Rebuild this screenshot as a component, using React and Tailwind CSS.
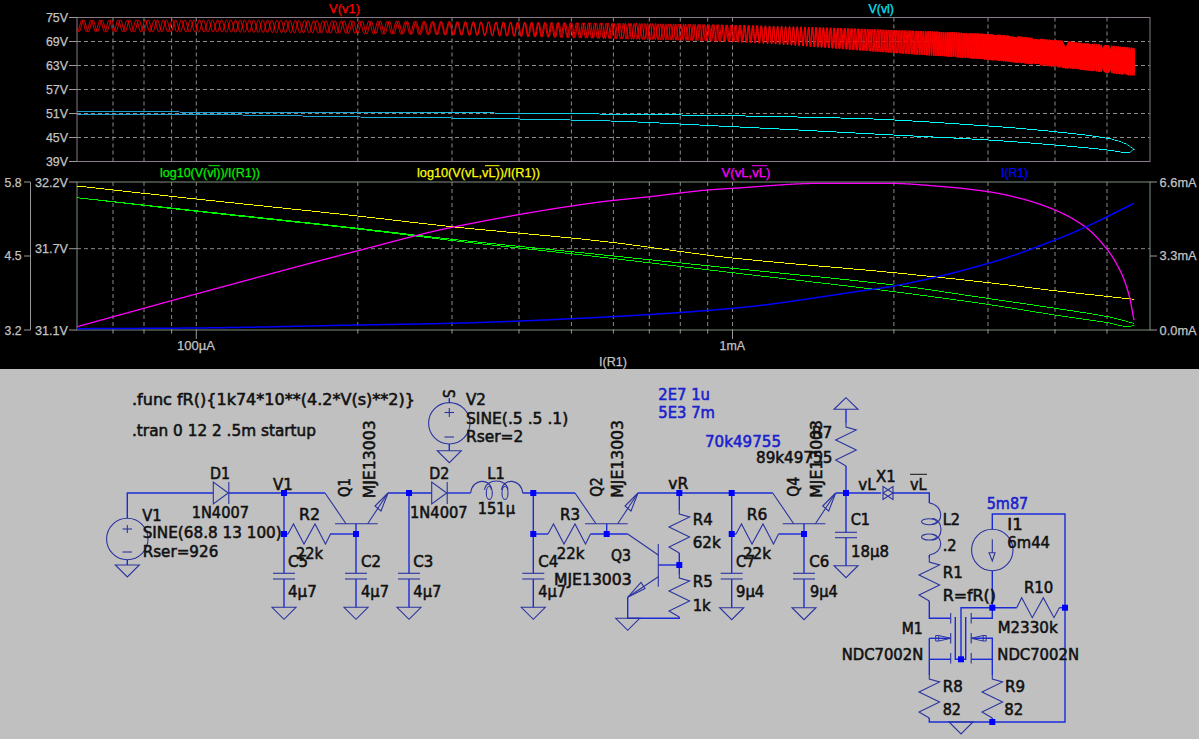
import React from "react";

// monotone cubic interpolation through the read-off trace points
const hermite = (pts) => {
  const n = pts.length;
  const d = [];
  for (let i = 0; i < n - 1; i++) d.push((pts[i + 1][1] - pts[i][1]) / (pts[i + 1][0] - pts[i][0]));
  const m = [d[0]];
  for (let i = 1; i < n - 1; i++) m.push(d[i - 1] * d[i] <= 0 ? 0 : (2 * d[i - 1] * d[i]) / (d[i - 1] + d[i]));
  m.push(d[n - 2]);
  return (x) => {
    if (x <= pts[0][0]) return pts[0][1];
    for (let i = 0; i < n - 1; i++) {
      if (x <= pts[i + 1][0]) {
        const h = pts[i + 1][0] - pts[i][0];
        const t = (x - pts[i][0]) / h;
        const t2 = t * t, t3 = t2 * t;
        return (2 * t3 - 3 * t2 + 1) * pts[i][1] + (t3 - 2 * t2 + t) * h * m[i] + (-2 * t3 + 3 * t2) * pts[i + 1][1] + (t3 - t2) * h * m[i + 1];
      }
    }
    return pts[n - 1][1];
  };
};

// stair-stepped trace, as a waveform plotted on a pixel grid
const stepped = (pts) => {
  const f = hermite(pts);
  const out = [];
  const x0 = pts[0][0], x1 = pts[pts.length - 1][0];
  for (let x = x0; x <= x1; x += 1) out.push(`${x.toFixed(1)},${(Math.floor(f(x)) + 0.5).toFixed(1)}`);
  out.push(`${x1},${pts[pts.length - 1][1]}`);
  return out.join(" ");
};
const smooth = (pts) => {
  const f = hermite(pts);
  const out = [];
  const x0 = pts[0][0], x1 = pts[pts.length - 1][0];
  for (let x = x0; x < x1; x += 0.5) out.push(`${x.toFixed(1)},${f(x).toFixed(2)}`);
  out.push(`${x1},${pts[pts.length - 1][1]}`);
  return out.join(" ");
};

const X0 = 77, X1 = 1134.8;
const fTop = hermite([[77, 20], [196, 20], [452, 21.7], [600, 23], [733, 25], [894, 30], [988, 34], [1055, 40], [1135, 48]]);
const fBot = hermite([[77, 31.7], [196, 32], [452, 35], [600, 38.5], [733, 42], [894, 53], [988, 60], [1055, 67], [1135, 76]]);
const redTrace = (rate, offset) => {
  let ph = offset;
  const out = [];
  for (let x = X0; x <= X1; x += 0.2) {
    let p = x < 400 ? 9.2 : 9.2 * Math.exp(-(x - 400) / 460);
    if (x > 900) p *= Math.exp(-(x - 900) / 130);
    ph += (0.2 * 2 * Math.PI * rate) / p;
    const t = fTop(x), b = fBot(x);
    out.push(`${x.toFixed(1)},${((t + b) / 2 + ((b - t) / 2) * Math.sin(ph)).toFixed(2)}`);
  }
  return out.join(" ");
};
const redA = redTrace(1, 0);
const redB = redTrace(1.018, 1.1);

const cyanTop = [[77, 111.7], [357, 112.5], [440, 112.7], [600, 114], [852, 118.3], [988.5, 126], [1055, 131.7], [1107.6, 138.3], [1125, 143.5], [1134, 149]];
const cyanBot = [[77, 114], [196, 114.5], [383, 117.3], [452, 118], [600, 120.7], [733, 126.7], [894, 135], [988.5, 140], [1055, 145], [1107.6, 150], [1129, 152.7], [1134, 149]];
const yellow = [[77, 186], [196.3, 199], [357.8, 216], [452, 226.7], [600, 241], [732.5, 258], [894, 272.7], [988.5, 282.7], [1055, 290.7], [1134, 299.3]];
const greenA = [[77, 197.7], [196, 210.7], [358, 228.3], [452, 239.3], [600, 254.6], [732.5, 268.3], [894, 285], [988.5, 298.5], [1055, 308.3], [1107.6, 316.7], [1134, 323.3]];
const greenB = [[77, 197.7], [196, 211.3], [358, 229], [452, 240.5], [600, 257], [732.5, 272.7], [894, 291.7], [988.5, 304.5], [1055, 315], [1107.6, 322.7], [1129, 326.7], [1134, 325]];
const magenta = [[77, 326.7], [196, 294], [358, 250.7], [452, 227.3], [600, 202], [649.7, 196.7], [707.7, 190], [733, 188.3], [821.5, 183.3], [888.4, 183.3], [943.8, 186.7], [988.5, 191.7], [1020, 198.3], [1055, 210], [1085, 226.7], [1107.6, 250], [1121.4, 273.3], [1129, 295], [1134, 320]];
const blue = [[77, 328.7], [196, 328], [358, 325], [452, 323.3], [600, 317.3], [733, 308.3], [867.4, 290], [894, 286], [988.5, 263.3], [1055, 240], [1085, 227.3], [1134, 203.3]];

const gridX = [113, 144, 171.6, 196.3, 357.8, 452, 519, 571.4, 613.4, 649.3, 680.3, 707.7, 732.5, 893.9, 988, 1055, 1107];
const gridTop = [41.5, 65.5, 89.5, 113.5, 137.5];
const axisTop = [["75V", 17.5], ["69V", 41.5], ["63V", 65.5], ["57V", 89.5], ["51V", 113.5], ["45V", 137.5], ["39V", 161.5]];

const Tx = ({ x, y, w, c = "#c4c4c4", t }) => (
  <text x={x} y={y} fill={c} stroke={c} strokeWidth="0.25" fontSize="13" textLength={w} lengthAdjust="spacingAndGlyphs">{t}</text>
);

const Plot = () => (
  <svg viewBox="0 0 1199 369" className="block w-[1199px] h-[369px] font-['Liberation_Sans',sans-serif]">
    <defs>
      <linearGradient id="cy" gradientUnits="userSpaceOnUse" x1="300" x2="800" y1="0" y2="0">
        <stop offset="0" stopColor="#1ca0d4" />
        <stop offset="1" stopColor="#00ffff" />
      </linearGradient>
    </defs>
    {/* grid */}
    <g stroke="#8a8a8a" strokeWidth="1" strokeDasharray="4 3" fill="none">
      {gridX.map((x) => <line key={x} x1={x} x2={x} y1="17.5" y2="161.5" />)}
      {gridX.map((x) => <line key={x} x1={x} x2={x} y1="182" y2="330" />)}
      {gridTop.map((y) => <line key={y} x1="77" x2="1150" y1={y} y2={y} />)}
      <line x1="77" x2="1150" y1="248.7" y2="248.7" />
    </g>
    {/* frames */}
    <rect x="77" y="17.5" width="1073" height="144" fill="none" stroke="#857a85" />
    <rect x="77" y="182" width="1073" height="148" fill="none" stroke="#7f907f" />
    {/* ticks */}
    <g stroke="#9a9a9a" strokeWidth="1">
      {axisTop.map(([, y]) => <line key={y} x1="69" x2="77" y1={y} y2={y} />)}
      {[182, 248.7, 330].map((y) => <line key={y} x1="69" x2="77" y1={y} y2={y} />)}
      {[182, 256, 330].map((y) => <line key={y} x1="24" x2="30.5" y1={y} y2={y} />)}
      <line x1="30.5" x2="30.5" y1="182" y2="330" />
      {[182, 256, 330].map((y) => <line key={y} x1="1150" x2="1157" y1={y} y2={y} />)}
      {gridX.map((x) => <line key={x} x1={x} x2={x} y1="330" y2={x === 196.3 || x === 732.5 ? 339 : 333.5} />)}
    </g>
    {/* traces */}
    <g fill="none" strokeWidth="1" strokeLinejoin="bevel">
      <polyline points={redA} stroke="#ff0000" />
      <polyline points={redB} stroke="#ff0000" />
      <polyline points={stepped(cyanTop)} stroke="url(#cy)" />
      <polyline points={stepped(cyanBot)} stroke="url(#cy)" />
      <polyline points={stepped(greenA)} stroke="#00ff00" />
      <polyline points={stepped(greenB)} stroke="#00f000" />
      <polyline points={stepped(yellow)} stroke="#ffff00" />
      <polyline points={smooth(magenta)} stroke="#ff00ff" strokeWidth="1.3" />
      <polyline points={smooth(blue)} stroke="#0000ff" strokeWidth="1.5" />
    </g>
    {/* axis text */}
    {axisTop.map(([t, y]) => <Tx key={t} x="46" y={y + 4.5} w="22" t={t} />)}
    <Tx x="35" y="186.5" w="33" t="32.2V" />
    <Tx x="35" y="253" w="33" t="31.7V" />
    <Tx x="35" y="334.5" w="33" t="31.1V" />
    <Tx x="4.6" y="186.5" w="17" t="5.8" />
    <Tx x="4.6" y="260" w="17" t="4.5" />
    <Tx x="4.6" y="334.5" w="17" t="3.2" />
    <Tx x="1159.6" y="186.5" w="37" t="6.6mA" />
    <Tx x="1159.6" y="260" w="37" t="3.3mA" />
    <Tx x="1159.6" y="334.5" w="37" t="0.0mA" />
    <Tx x="177" y="349.5" w="38" t="100µA" />
    <Tx x="719.6" y="349.5" w="25.5" t="1mA" />
    <Tx x="599" y="366" w="28" t="I(R1)" />
    {/* trace names */}
    <Tx x="329" y="12.5" w="31" c="#ff0000" t="V(v1)" />
    <Tx x="868.5" y="12.5" w="25.5" c="#00e8ff" t="V(vl)" />
    <Tx x="160" y="177" w="100" c="#00f000" t="log10(V(vl))/I(R1))" />
    <Tx x="417" y="177" w="123" c="#ffff00" t="log10(V(vL,vL))/I(R1))" />
    <Tx x="721.5" y="177" w="49" c="#ff00ff" t="V(vL,vL)" />
    <Tx x="1001" y="177" w="27" c="#0000ff" t="I(R1)" />
    <g strokeWidth="1">
      <line x1="208.6" x2="220" y1="165.7" y2="165.7" stroke="#00f000" />
      <line x1="485" x2="499.5" y1="165.7" y2="165.7" stroke="#ffff00" />
      <line x1="752" x2="767" y1="165.7" y2="165.7" stroke="#ff00ff" />
    </g>
  </svg>
);

const WIRE = "#1a2bd8";
const SYM = "#2a339f";

const W = ({ p }) => <polyline points={p} fill="none" stroke={WIRE} strokeWidth="1.4" />;
const S = ({ p, fill = "none" }) => <polyline points={p} fill={fill} stroke={SYM} strokeWidth="1.1" />;
const Dot = ({ x, y }) => <rect x={x - 3} y={y - 3} width="6" height="6" fill="#0000ff" />;
const Gnd = ({ x, y }) => <polygon points={`${x - 12},${y} ${x + 12},${y} ${x},${y + 12}`} fill="none" stroke={SYM} strokeWidth="1.1" />;
const Cap = ({ x, y = 573.3, h = 5.7 }) => (
  <g>
    <S p={`${x - 11},${y} ${x + 11},${y}`} />
    <S p={`${x - 11},${y + h} ${x + 11},${y + h}`} />
  </g>
);
const Bjt = ({ x }) => (
  <g>
    <S p={`${x},493 ${x + 21},523.7`} />
    <S p={`${x + 10},523.7 ${x + 52.7},523.7`} />
    <S p={`${x + 42.7},523.7 ${x + 63},493`} />
    <polygon points={`${x + 63},493 ${x + 50},506 ${x + 56},511`} fill="none" stroke={SYM} strokeWidth="1.1" />
  </g>
);
const Zig = ({ x, y, d = 10.3 }) => (
  <S p={`${x},${y} ${x},${y + 4} ${x + d},${y + 7} ${x - d},${y + 17} ${x + d},${y + 27} ${x - d},${y + 37} ${x},${y + 43}`} />
);
const ZigH = ({ x }) => (
  <S p={`${x},534 ${x + 5.5},524 ${x + 16},544 ${x + 27},524 ${x + 37.5},544 ${x + 42.5},534`} />
);
const Dio = ({ x }) => (
  <g>
    <polygon points={`${x},482 ${x},504 ${x + 15},493`} fill="none" stroke={SYM} strokeWidth="1.1" />
    <S p={`${x + 15.5},482 ${x + 15.5},504`} />
  </g>
);

const L = ({ x, y, w, t, c = "#111111" }) => (
  <text x={x} y={y} fill={c} stroke={c} strokeWidth="0.55" fontSize="15" textLength={w} lengthAdjust="spacingAndGlyphs">{t}</text>
);
const R = ({ x, y, w, t }) => (
  <text x={x} y={y} fill="#111111" stroke="#111111" strokeWidth="0.55" fontSize="15" textLength={w} lengthAdjust="spacingAndGlyphs" transform={`rotate(-90 ${x} ${y})`}>{t}</text>
);

const labels = [
  [132, 405, 283, ".func fR(){1k74*10**(4.2*V(s)**2)}"],
  [132, 436, 184, ".tran 0 12 2 .5m startup"],
  [210, 479, 20, "D1"], [191.7, 518, 57.3, "1N4007"], [273, 490, 19.7, "V1"],
  [142.3, 520.7, 19.4, "V1"], [142.7, 538, 139, "SINE(68.8 13 100)"], [142.7, 556.7, 75.6, "Rser=926"],
  [299, 520, 21, "R2"], [296, 559, 27, "22k"], [288, 566.7, 20, "C5"], [288, 597.3, 28.7, "4µ7"],
  [361, 566.7, 20, "C2"], [361, 597.3, 28, "4µ7"], [413.3, 566.7, 20, "C3"], [413.3, 597.3, 28, "4µ7"],
  [466, 405, 20, "V2"], [466, 424, 102.3, "SINE(.5 .5 .1)"], [466, 441.7, 57.3, "Rser=2"],
  [429.3, 479.3, 20, "D2"], [410, 517.7, 57.7, "1N4007"], [487.3, 479, 17.4, "L1"], [477.7, 514, 37.3, "151µ"],
  [668.3, 489.3, 20, "vR"], [560, 520, 20, "R3"], [556.7, 559.3, 27.6, "22k"], [538.3, 566.7, 20, "C4"],
  [554, 585, 77.7, "MJE13003"], [538.3, 597, 27.7, "4µ7"], [611, 560.7, 20, "Q3"],
  [692.7, 525, 20, "R4"], [692.7, 548.3, 28, "62k"], [692.7, 586.7, 20, "R5"], [692.7, 610.7, 18, "1k"],
  [746.7, 520, 20.6, "R6"], [743, 559.3, 28, "22k"], [736, 566.7, 19, "C7"], [736, 597.3, 28.3, "9µ4"],
  [809.3, 566.7, 20, "C6"], [810, 597.3, 27.7, "9µ4"],
  [811.7, 438.3, 20.6, "R7"], [756, 462.7, 76.3, "89k49755"],
  [858.3, 490, 17.4, "vL"], [876, 481.7, 19.7, "X1"], [910, 490, 16.7, "vL"],
  [850.7, 525, 19.3, "C1"], [851, 556.7, 38, "18µ8"],
  [942.7, 525, 17.3, "L2"], [942.7, 550.7, 14, ".2"], [942.7, 577.7, 20, "R1"], [942.7, 600.7, 53.3, "R=fR()"],
  [1007.3, 530, 15.4, "I1"], [1007.3, 548.3, 42.7, "6m44"], [1024, 593.3, 29.3, "R10"], [1020, 633.3, 37.7, "330k"],
  [997.7, 633.3, 22.3, "M2"], [901.7, 634.3, 21, "M1"], [841.7, 660, 81.6, "NDC7002N"], [997.3, 660, 81.7, "NDC7002N"],
  [942.7, 691.7, 20, "R8"], [942.7, 715, 18.3, "82"], [1005, 691.7, 20, "R9"], [1004.3, 715, 19, "82"],
];
const blueLabels = [
  [658.3, 400, 51.7, "2E7 1u"], [658.3, 418.3, 56.7, "5E3 7m"], [705, 446.7, 76, "70k49755"], [986.7, 509.3, 41.6, "5m87"],
];
const vertical = [
  [350, 497, 19, "Q1"], [375, 498.3, 78, "MJE13003"], [601.7, 496.7, 19.4, "Q2"], [623.3, 497.7, 77.7, "MJE13003"],
  [799, 496.7, 20, "Q4"], [822.3, 497.7, 77.7, "MJE13003"], [455, 398, 8.5, "S"],
];

const Mos = ({ x, dir }) => (
  <g>
    <S p={`${x},613 ${x},623.5`} />
    <S p={`${x},633 ${x},643.5`} />
    <S p={`${x},653 ${x},663.5`} />
    <polygon points={`${x},638.3 ${x + dir * 12},635.5 ${x + dir * 12},641 `} fill="none" stroke={SYM} strokeWidth="1" />
    <polyline points={`${x + dir * 12},635.5 ${x + dir * 15},635.5 ${x + dir * 15},641 ${x + dir * 12},641`} fill="none" stroke={SYM} strokeWidth="1" />
  </g>
);

const Schematic = () => (
  <svg viewBox="0 369 1199 370" className="block w-[1199px] h-[370px] font-['DejaVu_Sans',sans-serif]">
    {/* wires */}
    <W p="127.3,518 127.3,493 213,493" />
    <W p="229,493 325,493" />
    <W p="388,493 432,493" />
    <W p="447,493 470.7,493" />
    <W p="522.7,493 575,493" />
    <W p="638,493 772.7,493" />
    <W p="836,493 881,493" />
    <W p="893,493 929.3,493 929.3,503" />
    <W p="284,493 284,573.3" /><W p="284,579 284,607.3" />
    <W p="284,534 288,534" /><W p="330,534 356,534" />
    <W p="356,523.7 356,573.3" /><W p="356,579 356,607.3" />
    <W p="409,493 409,573.3" /><W p="409,579 409,607.3" />
    <W p="533.3,493 533.3,573.3" /><W p="533.3,579 533.3,607.3" />
    <W p="533.3,534 548,534" /><W p="590.5,534 627.7,534" />
    <W p="606.7,523.7 606.7,534" />
    <W p="679.3,493 679.3,510" /><W p="679.3,553 679.3,574" /><W p="679.3,617 679.3,618.3 627.7,618.3 627.7,597.3" />
    <W p="658.3,565 679.3,565" />
    <W p="731.7,493 731.7,573.3" /><W p="731.7,579 731.7,607.7" />
    <W p="731.7,534 736,534" /><W p="778.5,534 804,534" />
    <W p="804,523.7 804,573.3" /><W p="804,579 804,607.7" />
    <W p="846,409.3 846,423" /><W p="846,466 846,532.3" /><W p="846,537.7 846,565.7" />
    <W p="929.3,555 929.3,558" /><W p="929.3,601 929.3,618.3 950.7,618.3" />
    <W p="929.3,638.3 950.7,638.3" /><W p="929.3,638.3 929.3,675" /><W p="929.3,659.3 950.7,659.3" />
    <W p="971.2,618.3 992.3,618.3 992.3,607.7" /><W p="971.2,638.3 992.3,638.3 992.3,675" /><W p="971.2,659.3 992.3,659.3" />
    <W p="929.3,718 929.3,722 1065,722 1065,514 992.3,514 992.3,529.3" />
    <W p="992.3,570.7 992.3,607.7" />
    <W p="961,659.3 961,607.7 1016.7,607.7" /><W p="1059.3,607.7 1065,607.7" />
    <W p="955.3,617 955.3,659.3 965.7,659.3 965.7,617" />
    <W p="992.3,718 992.3,722" />
    <W p="449.3,398 449.3,402.6" /><W p="449.3,444 449.3,450.7" />

    {/* sources */}
    <circle cx="127.3" cy="539" r="20.7" fill="none" stroke={SYM} strokeWidth="1.1" />
    <S p="127.3,525 127.3,533" /><S p="122.5,529 132,529" /><S p="122.5,552 132,552" />
    <W p="127.3,559.7 127.3,565" /><Gnd x={127.3} y={565} />
    <circle cx="449.3" cy="423.3" r="20.7" fill="none" stroke={SYM} strokeWidth="1.1" />
    <S p="449.3,408 449.3,417" /><S p="444.5,412.5 454,412.5" /><S p="444.5,437 454,437" />
    <Gnd x={449.3} y={450.7} />
    <circle cx="992.3" cy="550" r="20.7" fill="none" stroke={SYM} strokeWidth="1.1" />
    <S p="992.3,539.3 992.3,552.7" />
    <polygon points="989,552.7 995,552.7 992.3,561" fill="none" stroke={SYM} strokeWidth="1.1" />

    {/* semis */}
    <Dio x={213.3} /><Dio x={431.7} />
    <Bjt x={325} /><Bjt x={575} /><Bjt x={772.7} />
    <S p="627.7,534 658.3,555" />
    <S p="658.3,544 658.3,586.7" />
    <S p="658.3,576.7 627.7,597.3" />
    <polygon points="627.7,597.3 645,588.5 641,582.5" fill="none" stroke={SYM} strokeWidth="1.1" />
    {/* X1 */}
    <polygon points="883,486.5 883,499.5 893,493" fill="none" stroke={SYM} strokeWidth="1.1" />
    <polygon points="893,486.5 893,499.5 883,493" fill="none" stroke={SYM} strokeWidth="1.1" />

    {/* inductors */}
    <g fill="none" stroke={SYM} strokeWidth="1.1">
      <path d="M470.7 493 C472 478 491 478 491.5 490 M484.5 490 C486 478 507 478 508 490 M501.5 490 C503 478 521 478 522.7 493" />
      <ellipse cx="489.3" cy="493" rx="3" ry="6.5" /><ellipse cx="505" cy="493" rx="3" ry="6.5" />
      <path d="M929.3 503 C944 505 944 524 932 524.5 M932 518.5 C944 519 944 540 932 540 M932 534 C944 536 944 553 929.3 555" />
      <ellipse cx="929" cy="521.7" rx="7.5" ry="3" /><ellipse cx="929" cy="537" rx="7.5" ry="3" />
    </g>

    {/* resistors */}
    <ZigH x={288} /><ZigH x={548} /><ZigH x={736} />
    <Zig x={679.3} y={510} /><Zig x={679.3} y={574} /><Zig x={846} y={423} />
    <Zig x={929.3} y={558} /><Zig x={929.3} y={675} /><Zig x={992.3} y={675} />
    <S p="1016.7,607.7 1021.7,597.7 1032.3,617.7 1043.3,597.7 1054,617.7 1059.3,607.7" />

    {/* caps */}
    <Cap x={284} /><Cap x={356} /><Cap x={409} /><Cap x={533.3} /><Cap x={731.7} /><Cap x={804} />
    <Cap x={846} y={532.3} h={5.4} />

    {/* grounds */}
    <Gnd x={284} y={607.3} /><Gnd x={356} y={607.3} /><Gnd x={409} y={607.3} /><Gnd x={533.3} y={607.3} />
    <Gnd x={627.7} y={618.3} /><Gnd x={731.7} y={607.7} /><Gnd x={804} y={607.7} /><Gnd x={846} y={565.7} />
    <Gnd x={961} y={722} />
    <polygon points="846,397.7 834,409.3 858,409.3" fill="none" stroke={SYM} strokeWidth="1.1" />

    {/* mosfets */}
    <Mos x={950.7} dir={-1} /><Mos x={971.2} dir={1} />

    {/* junctions */}
    {[[284, 493], [409, 493], [533.3, 493], [679.3, 493], [731.7, 493], [846, 493], [284, 534], [356, 534], [533.3, 534], [606.7, 534], [679.3, 565], [731.7, 534], [804, 534], [961, 659.3], [992.3, 607.7], [1065, 607.7], [992.3, 722]].map(([x, y]) => <Dot key={`${x}-${y}`} x={x} y={y} />)}

    {/* labels */}
    {labels.map(([x, y, w, t]) => <L key={`${x}-${y}`} x={x} y={y} w={w} t={t} />)}
    {blueLabels.map(([x, y, w, t]) => <L key={t} x={x} y={y} w={w} t={t} c="#1a22cc" />)}
    {vertical.map(([x, y, w, t]) => <R key={`${x}-${y}`} x={x} y={y} w={w} t={t} />)}
    <line x1="910" x2="927" y1="474.3" y2="474.3" stroke="#111111" strokeWidth="1" />
  </svg>
);

export default function App() {
  return (
    <div className="w-[1199px] h-[739px] overflow-hidden flex flex-col bg-[#c0c0c0]">
      <div className="bg-black h-[369px]">
        <Plot />
      </div>
      <div className="h-[370px] bg-[#c0c0c0]">
        <Schematic />
      </div>
    </div>
  );
}
